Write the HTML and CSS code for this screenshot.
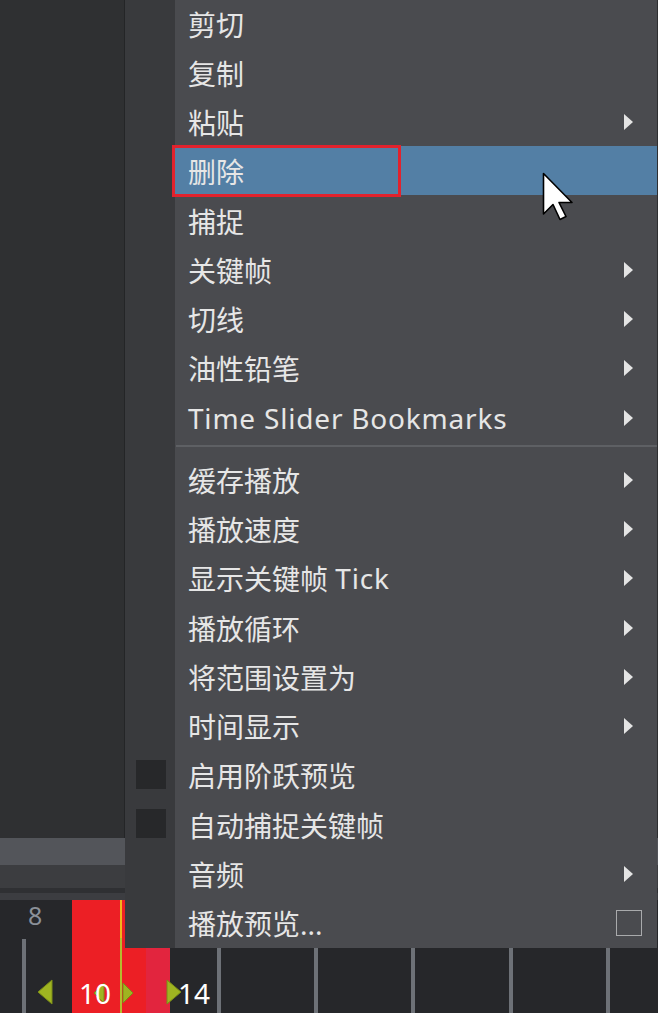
FILE: index.html
```html
<!DOCTYPE html>
<html lang="zh-CN">
<head>
    <meta charset="UTF-8">
    <meta name="viewport" content="width=device-width, initial-scale=1.0">
    <title>时间滑块菜单</title>
    <link rel="stylesheet" href="styles.css">
</head>
<body>
    <div class="app">
        <div class="viewport"></div>
        <div class="range">
            <div class="range-bar"></div>
            <div class="range-track"></div>
            <div class="range-gap"></div>
            <div class="range-edge"></div>
        </div>
        <div class="timeline">
            <div class="ticks"></div>
            <div class="key-range"></div>
            <div class="key-range alt"></div>
            <div class="playhead"></div>
            <span class="frame small">8</span>
            <svg class="step step-l1" width="16" height="26" viewBox="0 0 16 26"><polygon points="15,1 1,13 15,25" /></svg>
            <svg class="step step-l2" width="12" height="22" viewBox="0 0 12 22"><polygon points="11,1 1,11 11,21" /></svg>
            <svg class="step step-r1" width="12" height="22" viewBox="0 0 12 22"><polygon points="1,1 11,11 1,21" /></svg>
            <svg class="step step-r2" width="16" height="26" viewBox="0 0 16 26"><polygon points="1,1 15,13 1,25" /></svg>
            <span class="frame current">10</span>
            <span class="frame end">14</span>
        </div>

        <ul class="menu">
            <li class="item"><span class="mark"></span><span class="label">剪切</span></li>
            <li class="item"><span class="mark"></span><span class="label">复制</span></li>
            <li class="item"><span class="mark"></span><span class="label">粘贴<i class="arrow"></i></span></li>
            <li class="item active"><span class="mark"></span><span class="label">删除</span></li>
            <li class="item"><span class="mark"></span><span class="label">捕捉</span></li>
            <li class="item"><span class="mark"></span><span class="label">关键帧<i class="arrow"></i></span></li>
            <li class="item"><span class="mark"></span><span class="label">切线<i class="arrow"></i></span></li>
            <li class="item"><span class="mark"></span><span class="label">油性铅笔<i class="arrow"></i></span></li>
            <li class="item"><span class="mark"></span><span class="label"><span class="latin">Time Slider Bookmarks</span><i class="arrow"></i></span></li>
            <li class="sep"></li>
            <li class="item"><span class="mark"></span><span class="label">缓存播放<i class="arrow"></i></span></li>
            <li class="item"><span class="mark"></span><span class="label">播放速度<i class="arrow"></i></span></li>
            <li class="item"><span class="mark"></span><span class="label">显示关键帧&nbsp;<span class="latin">Tick</span><i class="arrow"></i></span></li>
            <li class="item"><span class="mark"></span><span class="label">播放循环<i class="arrow"></i></span></li>
            <li class="item"><span class="mark"></span><span class="label">将范围设置为<i class="arrow"></i></span></li>
            <li class="item"><span class="mark"></span><span class="label">时间显示<i class="arrow"></i></span></li>
            <li class="item"><span class="mark"><b class="check"></b></span><span class="label">启用阶跃预览</span></li>
            <li class="item"><span class="mark"><b class="check"></b></span><span class="label">自动捕捉关键帧</span></li>
            <li class="item"><span class="mark"></span><span class="label">音频<i class="arrow"></i></span></li>
            <li class="item"><span class="mark"></span><span class="label">播放预览...<i class="box"></i></span></li>
        </ul>

        <div class="callout"></div>
        <svg class="cursor" width="34" height="52" viewBox="0 0 34 52">
            <path d="M1.5 1.5 L1.5 42 L11 32.5 L18 47.5 L24 44.5 L17 30.5 L30 30.5 Z" fill="#fff" stroke="#000" stroke-width="1.6" stroke-linejoin="round" />
        </svg>
    </div>
</body>
</html>
```

FILE: styles.css
```css
body {
    margin: 0;
    padding: 0;
    background-color: #2e2f31;
    font-family: "Noto Sans", "Noto Sans CJK SC", sans-serif;
}

.app {
    position: relative;
    width: 658px;
    height: 1013px;
    overflow: hidden;
    display: flex;
    flex-direction: column;
}

.viewport {
    height: 838px;
    background-color: #2f3032;
    border-right: 1px solid #242527;
    width: 124px;
}

.range-bar {
    height: 27px;
    background-color: #53555a;
}
.range-track {
    height: 23px;
    background-color: #3c3d40;
}
.range-gap {
    height: 5px;
    background-color: #2f3033;
}
.range-edge {
    height: 7px;
    background-color: #3c3d41;
}

.timeline {
    position: relative;
    flex: 1;
    background-color: #26272a;
}

.ticks {
    margin-top: 39px;
    height: 74px;
    background: repeating-linear-gradient(to right, transparent 0 22px, #6d7177 22px 26px, transparent 26px 97.3px);
}

.key-range {
    position: absolute;
    top: 0;
    bottom: 0;
    left: 72px;
    width: 74px;
    background-color: #ec1f25;
}
.key-range.alt {
    left: 146px;
    width: 24px;
    background-color: #e2253e;
}

.playhead {
    position: absolute;
    top: 0;
    bottom: 0;
    left: 120px;
    width: 2px;
    background: linear-gradient(#f0b41c 0 38px, #b4bd2e 38px);
}

.frame {
    position: absolute;
    font-size: 28px;
    line-height: 1;
    color: #fff;
}
.frame.small {
    left: 28px;
    top: 3px;
    font-size: 25px;
    color: #8b9199;
}
.frame.current {
    left: 79px;
    top: 79px;
}
.frame.end {
    left: 178px;
    top: 79px;
}

.step {
    position: absolute;
}
.step polygon {
    fill: #9fb421;
    stroke: #7b8d16;
    stroke-width: 1;
}
.step-l1 { left: 37px; top: 79px; }
.step-l2 { left: 93px; top: 82px; }
.step-r1 { left: 122px; top: 82px; }
.step-r2 { left: 166px; top: 79px; }

/* popup menu */
.menu {
    position: absolute;
    left: 125px;
    top: -2px;
    width: 532px;
    margin: 0;
    padding: 0 0 1px;
    list-style: none;
    background: linear-gradient(to right, #393a3d 50px, #4a4b4f 50px);
    font-size: 28px;
    color: #e6e6e6;
    z-index: 2;
}

.item {
    display: flex;
    height: 49.25px;
}

.mark {
    width: 50px;
    flex: none;
    display: flex;
    align-items: center;
}

.check {
    margin-left: 11px;
    width: 30px;
    height: 29px;
    background-color: #27282a;
}

.label {
    flex: 1;
    display: flex;
    align-items: center;
    padding: 2px 24px 0 13px;
    white-space: nowrap;
}

.latin {
    letter-spacing: 0.8px;
}

.item.active .label {
    background-color: #537fa5;
}

.arrow {
    margin-left: auto;
    width: 0;
    height: 0;
    border-left: 9px solid #e4e4e4;
    border-top: 8px solid transparent;
    border-bottom: 8px solid transparent;
}

.box {
    margin-left: auto;
    margin-right: -9px;
    width: 24px;
    height: 24px;
    border: 1px solid #a9aaac;
}

.sep {
    height: 2px;
    margin: 4px 0 7px 51px;
    background-color: #5e6064;
}

.callout {
    position: absolute;
    left: 172px;
    top: 145px;
    width: 229px;
    height: 52px;
    box-sizing: border-box;
    border: 3px solid #e2222d;
    z-index: 3;
}

.cursor {
    position: absolute;
    left: 542px;
    top: 172px;
    z-index: 4;
}
```
